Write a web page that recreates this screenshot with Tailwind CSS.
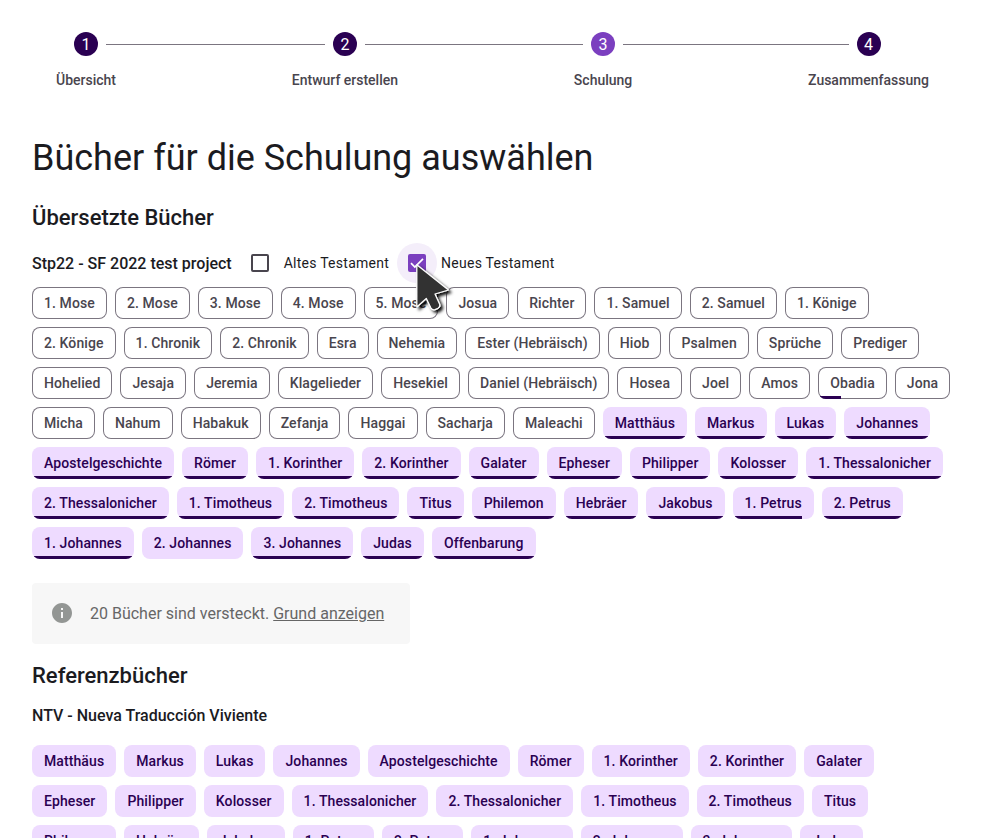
<!DOCTYPE html>
<html lang="de">
<head>
<meta charset="utf-8">
<title>Bücher für die Schulung auswählen</title>
<script src="https://cdn.jsdelivr.net/npm/@tailwindcss/browser@4"></script>
</head>
<body class="h-screen overflow-hidden bg-white font-['Roboto',sans-serif] text-[#1b1b1f]">
<div class="px-8 pt-8">
  <!-- Stepper -->
  <ol id="stepper" class="flex h-14 items-start"></ol>

  <h1 class="mt-12 text-4xl leading-[44px] font-normal">Bücher für die Schulung auswählen</h1>
  <h2 class="mt-6 text-[22px] leading-7 font-medium">Übersetzte Bücher</h2>

  <div class="mt-[11px] flex h-10 items-center">
    <span class="pt-px text-base font-medium">Stp22 - SF 2022 test project</span>
    <label class="ml-2 flex items-center">
      <span class="flex size-10 items-center justify-center"><span class="size-[18px] rounded-xs border-2 border-[#49454e]"></span></span>
      <span class="pl-1 text-sm tracking-[0.26px]">Altes Testament</span>
    </label>
    <label class="ml-2 flex items-center">
      <span class="relative flex size-10 items-center justify-center rounded-full bg-[#f4eefa]">
        <span class="flex size-[18px] items-center justify-center rounded-xs bg-[#7b3fbf]">
          <svg class="size-[18px]" viewBox="0 0 18 18" fill="none" stroke="#fff" stroke-width="1.7"><path d="M3 9.2 6.8 13 15 4.8"/></svg>
        </span>
        <svg class="absolute top-[17px] left-[15px] z-10 h-[56px] w-[48px] overflow-visible" viewBox="0 0 48 56">
          <defs><filter id="sh" x="-30%" y="-30%" width="180%" height="180%"><feDropShadow dx="2.5" dy="2.5" stdDeviation="1.8" flood-color="#000" flood-opacity=".95"/></filter></defs>
          <path filter="url(#sh)" d="M4.800 4.800V47L14.300 38.500L18.800 47.800Q20.300 50.500 23 49.600L26 48.300Q28.600 46.800 27.700 44.300L23 34L36.500 30Z" fill="#333" stroke="#fff" stroke-width="1.3" stroke-linejoin="round"/>
        </svg>
      </span>
      <span class="pl-1 text-sm tracking-[0.26px]">Neues Testament</span>
    </label>
  </div>

  <div id="translated" class="mt-1 flex flex-wrap gap-2"></div>

  <div class="mt-6 flex h-[61px] w-[378px] items-center rounded bg-[#f7f7f7] pl-[18px] text-base text-[#666]">
    <svg class="mr-4 mb-px size-6" viewBox="0 0 24 24" fill="#939694"><path d="M12 2C6.480 2 2 6.480 2 12s4.480 10 10 10 10-4.480 10-10S17.520 2 12 2zm1 15h-2v-6h2v6zm0-8h-2V7h2v2z"/></svg>
    <p>20 Bücher sind versteckt. <a class="underline">Grund anzeigen</a></p>
  </div>

  <h2 class="mt-[18px] text-[22px] leading-7 font-medium">Referenzbücher</h2>
  <h3 class="mt-[14px] text-base leading-6 font-medium">NTV - Nueva Traducción Viviente</h3>
  <div id="reference" class="mt-[17px] flex flex-wrap gap-2"></div>
</div>

<script>
const steps = ['Übersicht', 'Entwurf erstellen', 'Schulung', 'Zusammenfassung'];
document.getElementById('stepper').innerHTML = steps.map((s, i) => `
  ${i ? '<li class="mt-3 h-px flex-1 bg-[#7b7580]"></li>' : ''}
  <li class="flex flex-col">
    <div class="flex items-start gap-2">
      <span class="mt-3 h-px flex-1 ${i ? 'bg-[#7b7580]' : 'bg-transparent'}"></span>
      <span class="flex size-6 items-center justify-center rounded-full pt-px text-base leading-6 text-white ${i === 2 ? 'bg-[#7b3fbf]' : 'bg-[#2a0052]'}">${i + 1}</span>
      <span class="mt-3 h-px flex-1 ${i < 3 ? 'bg-[#7b7580]' : 'bg-transparent'}"></span>
    </div>
    <span class="mt-[14px] px-6 text-sm leading-5 font-medium whitespace-nowrap text-[#49454e]">${s}</span>
  </li>`).join('');

const ot = ['1. Mose','2. Mose','3. Mose','4. Mose','5. Mose','Josua','Richter','1. Samuel','2. Samuel','1. Könige','2. Könige','1. Chronik','2. Chronik','Esra','Nehemia','Ester (Hebräisch)','Hiob','Psalmen','Sprüche','Prediger','Hohelied','Jesaja','Jeremia','Klagelieder','Hesekiel','Daniel (Hebräisch)','Hosea','Joel','Amos','Obadia','Jona','Micha','Nahum','Habakuk','Zefanja','Haggai','Sacharja','Maleachi'];
const nt = ['Matthäus','Markus','Lukas','Johannes','Apostelgeschichte','Römer','1. Korinther','2. Korinther','Galater','Epheser','Philipper','Kolosser','1. Thessalonicher','2. Thessalonicher','1. Timotheus','2. Timotheus','Titus','Philemon','Hebräer','Jakobus','1. Petrus','2. Petrus','1. Johannes','2. Johannes','3. Johannes','Judas','Offenbarung'];

function chip(name, selected, progress) {
  const look = selected ? 'bg-[#eedbff] text-[#2a0052]' : 'inset-ring inset-ring-[#7b7580] text-[#49454e]';
  const bar = progress ? `<span class="absolute inset-x-px bottom-0 h-[3px]"><span class="block h-full bg-[#2a0052]" style="width:${progress}%"></span></span>` : '';
  return `<button class="relative h-8 overflow-hidden rounded-lg px-3 text-sm leading-5 font-medium tracking-[0.096px] whitespace-nowrap ${look}">${name}${bar}</button>`;
}
const partial = { 'Obadia': 33, '1. Petrus': 86, '2. Johannes': 0 };
document.getElementById('translated').innerHTML =
  ot.map(b => chip(b, false, partial[b] ?? 0)).join('') +
  nt.map(b => chip(b, true, partial[b] ?? 100)).join('');
document.getElementById('reference').innerHTML = nt.map(b => chip(b, true, 0)).join('');
</script>
</body>
</html>
